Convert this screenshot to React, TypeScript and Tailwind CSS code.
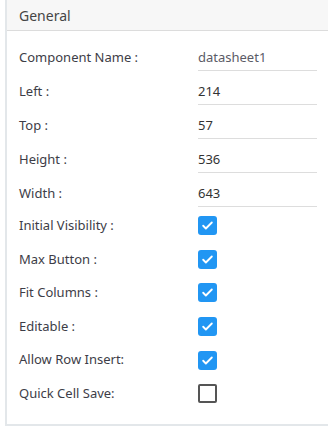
import { useState } from 'react';

const fields = [
  { label: 'Component Name :', value: 'datasheet1', muted: true },
  { label: 'Left :', value: '214' },
  { label: 'Top :', value: '57' },
  { label: 'Height :', value: '536' },
  { label: 'Width :', value: '643' },
];

const initialChecks = [
  { label: 'Initial Visibility :', checked: true },
  { label: 'Max Button :', checked: true },
  { label: 'Fit Columns :', checked: true },
  { label: 'Editable :', checked: true },
  { label: 'Allow Row Insert:', checked: true },
  { label: 'Quick Cell Save:', checked: false },
];

function Checkbox({ checked, onClick }: { checked: boolean; onClick: () => void }) {
  if (checked) {
    return (
      <button
        onClick={onClick}
        className="w-[19px] h-[19px] rounded-[3px] bg-[#2196f3] flex items-center justify-center"
      >
        <svg width="13" height="13" viewBox="0 0 24 24" fill="none" stroke="white" strokeWidth="3.4" strokeLinecap="round" strokeLinejoin="round">
          <path d="M4 12.5l5 5L20 6.5" />
        </svg>
      </button>
    );
  }
  return (
    <button onClick={onClick} className="w-[19px] h-[19px] rounded-[2px] border-2 border-[#555555] bg-white" />
  );
}

export default function App() {
  const [checks, setChecks] = useState(initialChecks);

  const toggle = (i: number) =>
    setChecks((prev) => prev.map((c, j) => (j === i ? { ...c, checked: !c.checked } : c)));

  return (
    <div className="w-[328px] h-[428px] bg-white font-['Noto_Sans',sans-serif] text-[13px] text-[#3d3d47]">
      <div className="ml-[5px] h-[426px] border-l-2 border-b-2 border-[#e3e7ea] flex flex-col">
        <div className="h-[31px] bg-[#f7f7f7] border-b border-[#dcdcdc] flex items-center pl-3 text-[14px] text-[#454545]">
          General
        </div>

        <div className="pt-[6px] pl-3 pr-[11px]">
          {fields.map((f) => (
            <div key={f.label} className="flex h-[34px]">
              <div className="w-[179px] pt-[10px] leading-[20px]">{f.label}</div>
              <div
                className={`flex-1 border-b border-[#dddddd] pt-[10px] leading-[20px] ${
                  f.muted ? 'text-[#5b5b66]' : 'text-[#333333]'
                }`}
              >
                {f.value}
              </div>
            </div>
          ))}

          <div className="pt-[2px]">
            {checks.map((c, i) => (
              <div key={c.label} className="flex items-center h-[33.6px]">
                <div className="w-[179px]">{c.label}</div>
                <Checkbox checked={c.checked} onClick={() => toggle(i)} />
              </div>
            ))}
          </div>
        </div>
      </div>
    </div>
  );
}
